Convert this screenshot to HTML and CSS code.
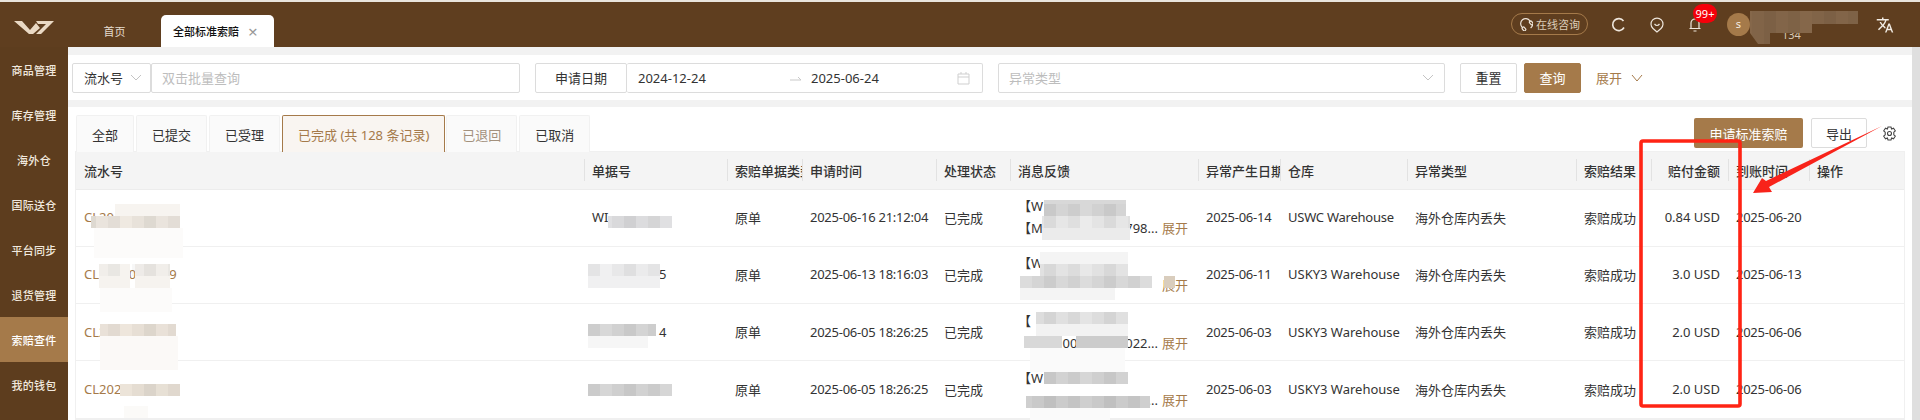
FILE: index.html
```html
<!DOCTYPE html>
<html lang="zh-CN">
<head>
<meta charset="utf-8">
<title>全部标准索赔</title>
<link rel="stylesheet" href="styles.css">
</head>
<body>
<div class="app">
  <div class="topline"></div>
  <header class="header">
    <div class="logo">
      <svg width="40" height="15" viewBox="0 0 40 15"><path class="logo-mark" d="M0 1 H8 L16 10 L22 3 L26 8 L19 14 H15 Z M22 1 H40 L27 14 H22 L32 4 H24 Z"/></svg>
    </div>
    <nav class="page-tabs">
      <a class="page-tab">首页</a>
      <a class="page-tab page-tab-active">全部标准索赔<span class="tab-close">×</span></a>
    </nav>
    <div class="tools">
      <div class="consult">
        <svg class="ic-line" width="14" height="14" viewBox="0 0 14 14"><g transform="rotate(-40 7 7)"><path d="M2 8 V6.5 A5 5 0 0 1 12 6.5 V8"/><rect x="1" y="7.5" width="2.5" height="4" rx="1"/><rect x="10.500" y="7.500" width="2.500" height="4" rx="1"/><path d="M11.500 11.500 Q11 13 8 13"/></g></svg>
        <span>在线咨询</span>
      </div>
      <svg class="ic-line tool-refresh" width="15" height="15" viewBox="0 0 15 15"><path d="M12.500 4 A6 6 0 1 0 13 10.500"/></svg>
      <svg class="ic-line tool-pin" width="14" height="16" viewBox="0 0 14 16"><path d="M7 15 L3 11.500 A6 6 0 1 1 11 11.500 Z"/><path d="M4.500 7 Q7 10 9.500 7"/></svg>
      <div class="bell">
        <svg class="ic-line" width="12" height="15" viewBox="0 0 12 15"><path d="M2 11 V6 A4 4 0 0 1 10 6 V11 M0.500 11.500 H11.500 M4.500 14 H7.500"/></svg>
        <span class="badge">99+</span>
      </div>
      <div class="user">
        <span class="avatar">s</span>
        <span class="user-id">134</span>
      </div>
      <svg class="tool-lang" width="18" height="18" viewBox="0 0 24 24"><path d="M12.87 15.07l-2.54-2.51.03-.03c1.74-1.94 2.98-4.17 3.71-6.53H17V4h-7V2H8v2H1v1.99h11.17C11.5 7.92 10.44 9.75 9 11.35 8.07 10.32 7.3 9.19 6.69 8h-2c.73 1.63 1.73 3.17 2.98 4.56l-5.09 5.02L4 19l5-5 3.11 3.11.76-2.04zM18.5 10h-2L12 22h2l1.12-3h4.75L21 22h2l-4.5-12zm-2.62 7l1.62-4.33L19.12 17h-3.24z"/></svg>
    </div>
  </header>
  <div class="body">
    <aside class="sidebar">
      <a class="side-item">商品管理</a>
      <a class="side-item">库存管理</a>
      <a class="side-item">海外仓</a>
      <a class="side-item">国际送仓</a>
      <a class="side-item">平台同步</a>
      <a class="side-item">退货管理</a>
      <a class="side-item side-item-active">索赔查件</a>
      <a class="side-item">我的钱包</a>
    </aside>
    <main class="content">
      <section class="search">
        <div class="ctl ctl-type">流水号<svg class="chev" width="12" height="7" viewBox="0 0 12 7"><path d="M1 1 L6 6 L11 1"/></svg></div>
        <div class="ctl ctl-query ph">双击批量查询</div>
        <div class="ctl ctl-label">申请日期</div>
        <div class="ctl ctl-range">
          <span class="date-a">2024-12-24</span>
          <svg class="range-arrow" width="11" height="6" viewBox="0 0 11 6"><path d="M0 5 H11 L8 2"/></svg>
          <span class="date-b">2025-06-24</span>
          <svg class="cal" width="13" height="14" viewBox="0 0 13 14"><path d="M1 3 H12 V13 H1 Z M1 6 H12 M4 1 V3 M9 1 V3"/></svg>
        </div>
        <div class="ctl ctl-kind ph">异常类型<svg class="chev" width="12" height="7" viewBox="0 0 12 7"><path d="M1 1 L6 6 L11 1"/></svg></div>
        <div class="ctl btn-reset">重置</div>
        <div class="ctl btn-query">查询</div>
        <div class="expand">展开<svg class="chev chev-gold" width="12" height="8" viewBox="0 0 12 8"><path d="M1 1 L6 7 L11 1"/></svg></div>
      </section>
      <section class="panel">
        <div class="panel-top">
          <div class="status-tabs">
            <a class="stab">全部</a>
            <a class="stab">已提交</a>
            <a class="stab">已受理</a>
            <a class="stab stab-active">已完成 (共 128 条记录)</a>
            <a class="stab stab-muted">已退回</a>
            <a class="stab">已取消</a>
          </div>
          <div class="actions">
            <div class="act act-main">申请标准索赔</div>
            <div class="act act-plain">导出</div>
            <svg class="gear" width="15" height="15" viewBox="0 0 15 15"><path d="M6 1 H9 L9.600 3 L11.500 2.200 L13.300 4.800 L11.800 6.200 V8.800 L13.300 10.200 L11.500 12.800 L9.600 12 L9 14 H6 L5.400 12 L3.500 12.800 L1.700 10.200 L3.200 8.800 V6.200 L1.700 4.800 L3.500 2.200 L5.400 3 Z"/><circle cx="7.500" cy="7.500" r="2"/></svg>
          </div>
        </div>
        <table class="grid">
          <colgroup>
            <col class="c-serial"><col class="c-doc"><col class="c-type"><col class="c-time"><col class="c-state"><col class="c-msg"><col class="c-date"><col class="c-wh"><col class="c-kind"><col class="c-result"><col class="c-amt"><col class="c-paid"><col class="c-op">
          </colgroup>
          <thead>
            <tr>
              <th>流水号</th><th>单据号</th><th>索赔单据类型</th><th>申请时间</th><th>处理状态</th><th>消息反馈</th><th>异常产生日期</th><th>仓库</th><th>异常类型</th><th>索赔结果</th><th class="num">赔付金额</th><th>到账时间</th><th>操作</th>
            </tr>
          </thead>
          <tbody>
            <tr>
              <td class="serial">CL20</td><td>WI</td><td>原单</td><td class="tight">2025-06-16 21:12:04</td><td>已完成</td>
              <td><div class="msg"><div>【W</div><div class="msg-line"><span>【M</span><span class="msg-end">798...<a class="more">展开</a></span></div></div></td>
              <td class="tight">2025-06-14</td><td class="tight">USWC Warehouse</td><td>海外仓库内丢失</td><td>索赔成功</td><td class="num">0.84 USD</td><td class="tight">2025-06-20</td><td></td>
            </tr>
            <tr>
              <td class="serial">CL&#8199;&#8199;&#8199;&#8199;0&#8199;&#8199;&#8199;&#8199; 9</td><td>&#8199;&#8199;&#8199;&#8199;&#8199;&#8199;&#8199;&#8199;&#8199;5</td><td>原单</td><td class="tight">2025-06-13 18:16:03</td><td>已完成</td>
              <td><div class="msg"><div>【W</div><div class="msg-line"><span></span><span class="msg-end"><a class="more">展开</a></span></div></div></td>
              <td class="tight">2025-06-11</td><td>USKY3 Warehouse</td><td>海外仓库内丢失</td><td>索赔成功</td><td class="num">3.0 USD</td><td class="tight">2025-06-13</td><td></td>
            </tr>
            <tr>
              <td class="serial">CL2</td><td>&#8199;&#8199;&#8199;&#8199;&#8199;&#8199;&#8199;&#8199;&#8199;4</td><td>原单</td><td class="tight">2025-06-05 18:26:25</td><td>已完成</td>
              <td><div class="msg"><div>【</div><div class="msg-line"><span>&#8199;&#8199;&#8199;&#8199;&#8199;&#8199;00</span><span class="msg-end">022...<a class="more">展开</a></span></div></div></td>
              <td class="tight">2025-06-03</td><td>USKY3 Warehouse</td><td>海外仓库内丢失</td><td>索赔成功</td><td class="num">2.0 USD</td><td class="tight">2025-06-06</td><td></td>
            </tr>
            <tr>
              <td class="serial">CL202</td><td></td><td>原单</td><td class="tight">2025-06-05 18:26:25</td><td>已完成</td>
              <td><div class="msg"><div>【W</div><div class="msg-line"><span></span><span class="msg-end">...<a class="more">展开</a></span></div></div></td>
              <td class="tight">2025-06-03</td><td>USKY3 Warehouse</td><td>海外仓库内丢失</td><td>索赔成功</td><td class="num">2.0 USD</td><td class="tight">2025-06-06</td><td></td>
            </tr>
          </tbody>
        </table>
      </section>
    </main>
    <div class="scrollbar"></div>
  </div>
</div>

<svg class="markup" width="1920" height="420" viewBox="0 0 1920 420">
  <defs>
    <pattern id="tile" width="60" height="12" patternUnits="userSpaceOnUse">
      <rect x="12" width="12" height="12" fill="#000" fill-opacity=".03"/>
      <rect x="24" width="12" height="12" fill="#000" fill-opacity=".07"/>
      <rect x="36" width="12" height="12" fill="#000" fill-opacity=".02"/>
      <rect x="48" width="12" height="12" fill="#000" fill-opacity=".05"/>
    </pattern>
  </defs>
  <!-- user name mosaic -->
  <g>
    <path fill="#85674a" d="M1750 11 H1858 V24 H1812 V33 H1770 V44 H1758 L1750 33 Z"/>
    <path fill="url(#tile)" d="M1750 11 H1858 V24 H1812 V33 H1770 V44 H1758 L1750 33 Z"/>
  </g>
  <!-- serial no. mosaic -->
  <g>
    <rect x="115" y="204" width="65" height="12" fill="#f7f4f0"/>
    <rect x="91" y="216" width="89" height="12" fill="#efe9e1"/><rect x="91" y="216" width="89" height="12" fill="url(#tile)"/>
    <rect x="94" y="228" width="89" height="30" fill="#fcfbfa"/>
    <rect x="99" y="264" width="31" height="24" fill="#f6f3ef"/><rect x="135" y="264" width="35" height="24" fill="#f6f3ef"/><rect x="99" y="264" width="71" height="12" fill="url(#tile)"/>
    <rect x="100" y="288" width="72" height="24" fill="#fcfbfa"/>
    <rect x="100" y="324" width="76" height="12" fill="#eee6dc"/><rect x="100" y="324" width="76" height="12" fill="url(#tile)"/>
    <rect x="100" y="336" width="78" height="34" fill="#fbf9f7"/>
    <rect x="120" y="384" width="60" height="12" fill="#ece4d9"/><rect x="120" y="384" width="60" height="12" fill="url(#tile)"/>
    <rect x="124" y="406" width="24" height="12" fill="#fbfaf8"/>
  </g>
  <!-- document no. mosaic -->
  <g>
    <rect x="608" y="216" width="64" height="12" fill="#e0e0e2"/><rect x="608" y="216" width="64" height="12" fill="url(#tile)"/>
    <rect x="588" y="264" width="72" height="24" fill="#f0f0f1"/><rect x="588" y="264" width="72" height="12" fill="url(#tile)"/>
    <rect x="588" y="324" width="68" height="12" fill="#d8d8d8"/><rect x="588" y="324" width="68" height="12" fill="url(#tile)"/>
    <rect x="588" y="336" width="60" height="12" fill="#f6f6f6"/>
    <rect x="588" y="384" width="84" height="12" fill="#d6d6d6"/><rect x="588" y="384" width="84" height="12" fill="url(#tile)"/>
  </g>
  <!-- message mosaic -->
  <g>
    <rect x="1044" y="200" width="82" height="16" fill="#d8d8d8"/><rect x="1044" y="204" width="82" height="12" fill="url(#tile)"/>
    <rect x="1042" y="216" width="88" height="24" fill="#ebebeb"/><rect x="1042" y="216" width="88" height="12" fill="url(#tile)"/>
    <rect x="1040" y="252" width="88" height="12" fill="#f4f4f4"/>
    <rect x="1040" y="264" width="88" height="12" fill="#e8e8e8"/><rect x="1040" y="264" width="88" height="12" fill="url(#tile)"/>
    <rect x="1020" y="276" width="132" height="12" fill="#dcdcdc"/><rect x="1020" y="276" width="132" height="12" fill="url(#tile)"/>
    <rect x="1020" y="288" width="95" height="12" fill="#f4f4f4"/>
    <rect x="1164" y="276" width="11" height="12" fill="#d9cdbd"/>
    <rect x="1036" y="312" width="92" height="12" fill="#e4e4e4"/><rect x="1036" y="312" width="92" height="12" fill="url(#tile)"/>
    <rect x="1036" y="324" width="92" height="12" fill="#f2f2f2"/>
    <rect x="1024" y="336" width="38" height="12" fill="#d8d8d8"/><rect x="1076" y="336" width="52" height="12" fill="#cccccc"/>
    <rect x="1030" y="348" width="95" height="24" fill="#fafafa"/>
    <rect x="1044" y="372" width="84" height="12" fill="#d6d6d6"/><rect x="1044" y="372" width="84" height="12" fill="url(#tile)"/>
    <rect x="1026" y="396" width="124" height="12" fill="#cfcfcf"/><rect x="1026" y="396" width="124" height="12" fill="url(#tile)"/>
    <rect x="1030" y="408" width="80" height="12" fill="#fafafa"/>
  </g>
  <!-- red annotation -->
  <rect class="red-box" x="1641" y="141" width="99" height="265" rx="2"/>
  <polygon class="red-arrow" points="1882,126 1766,181 1762,178 1753,193 1772,192 1769,187"/>
</svg>
</body>
</html>
```
FILE: styles.css
```css
* { box-sizing: border-box; }
html, body { margin: 0; height: 420px; overflow: hidden; }
body {
  font-family: "Noto Sans", "Noto Sans CJK SC", sans-serif;
  font-size: 13px;
  color: #333;
  background: #f2f2f2;
  position: relative;
}
a { color: inherit; text-decoration: none; }

.app { height: 420px; display: flex; flex-direction: column; }
.topline { height: 2px; background: #e9e4dc; }

/* header */
.header { height: 45px; background: #5f3e1f; display: flex; align-items: stretch; }
.logo { width: 68px; display: flex; justify-content: center; padding-top: 18px; }
.logo-mark { fill: #ead9c4; }
.page-tabs { display: flex; align-items: flex-end; margin-left: 24px; flex: 1; }
.page-tab { height: 32px; width: 69px; display: flex; align-items: center; justify-content: center; padding-right: 24px; color: #e6dccf; font-size: 11px; }
.page-tab-active { width: 113px; padding: 0 0 0 12px; justify-content: flex-start; background: #fff; color: #111; border-radius: 5px 5px 0 0; font-weight: 500; }
.tab-close { margin-left: 9px; color: #999; font-size: 17px; font-weight: 400; line-height: 1; }
.tools { display: flex; align-items: center; }
.consult { width: 77px; height: 22px; margin-top: -1px; display: flex; align-items: center; gap: 3px; padding-left: 7px; border: 1px solid #a57a4a; border-radius: 11px; color: #dccdb9; font-size: 11px; }
.ic-line { fill: none; stroke: #eee6dc; stroke-width: 1.2; }
.tool-refresh { margin-left: 23px; stroke-width: 1.6; }
.tool-pin { margin-left: 24px; }
.bell { width: 30px; margin-left: 25px; display: flex; position: relative; }
.badge { position: absolute; left: 4px; top: -13px; width: 24px; height: 19px; border-radius: 10px; background: #f5000a; color: #fff; font-size: 11px; line-height: 19px; text-align: center; }
.user { width: 129px; margin-left: 8px; display: flex; align-items: center; }
.avatar { width: 23px; height: 23px; border-radius: 50%; background: #a57a4a; color: #f5ede3; font-size: 11px; line-height: 22px; text-align: center; }
.user-id { margin: 20px 0 0 32px; color: #d8cab8; font-size: 11px; line-height: 12px; }
.tool-lang { margin: 0 26px 0 20px; fill: #f2ece4; }

/* body */
.body { flex: 1; min-height: 0; display: flex; }
.sidebar { width: 68px; background: #5d3d1e; display: flex; flex-direction: column; }
.side-item { height: 45px; display: flex; align-items: center; justify-content: center; color: #f1e9df; font-size: 11px; font-weight: 500; letter-spacing: .3px; }
.side-item-active { background: #a57a4a; color: #fff; }
.content { width: 1844px; padding-top: 8px; display: flex; flex-direction: column; gap: 7px; }
.scrollbar { width: 8px; background: #dfdfdf; }

/* search */
.search { height: 45px; padding-left: 4px; background: #fff; display: flex; align-items: center; }
.ctl { height: 30px; display: flex; align-items: center; border: 1px solid #dcdcdc; border-radius: 2px; background: #fff; }
.ph { color: #bdbdbd; }
.chev { fill: none; stroke: #c4c4c4; stroke-width: 1; }
.chev-gold { stroke: #a57a4a; margin-left: 9px; }
.ctl-type { width: 79px; padding-left: 11px; gap: 7px; }
.ctl-query { width: 369px; padding-left: 10px; }
.ctl-label { width: 92px; margin-left: 15px; justify-content: center; }
.ctl-range { width: 356px; padding: 0 12px 0 11px; border-left: 0; }
.date-a { width: 152px; }
.range-arrow { fill: none; stroke: #c9c9c9; stroke-width: 1; }
.date-b { margin-left: 10px; flex: 1; }
.cal { fill: none; stroke: #cfcfcf; stroke-width: 1; }
.ctl-kind { width: 447px; margin-left: 15px; padding: 0 10px 0 10px; justify-content: space-between; }
.btn-reset { width: 57px; margin-left: 15px; justify-content: center; }
.btn-query { width: 57px; margin-left: 7px; justify-content: center; background: #a57a4a; border-color: #a57a4a; color: #fff; }
.expand { margin-left: 15px; display: flex; align-items: center; color: #a57a4a; }

/* panel */
.panel { flex: 1; min-height: 0; padding: 8px 8px 0; background: #fff; }
.panel-top { height: 37px; display: flex; justify-content: space-between; align-items: flex-start; }
.status-tabs { display: flex; gap: 2px; }
.stab { height: 37px; padding: 0 15px; display: flex; align-items: center; background: #fafafa; border: 1px solid #f1f1f1; border-bottom: 0; border-radius: 2px 2px 0 0; }
.stab-active { margin-right: -1px; background: #f9f5f1; border-color: #a57a4a; color: #a57a4a; }
.stab-muted { color: #a3917d; }
.actions { height: 30px; margin-top: 3px; display: flex; align-items: center; }
.act { height: 30px; display: flex; align-items: center; justify-content: center; border-radius: 2px; }
.act-main { width: 109px; background: #a57a4a; color: #fff; }
.act-plain { width: 56px; margin-left: 8px; border: 1px solid #dcdcdc; }
.gear { margin: 0 7px 0 15px; fill: none; stroke: #444; stroke-width: 1.1; }

/* table */
.grid { width: 1828px; table-layout: fixed; border-collapse: collapse; box-shadow: 0 0 0 1px #f0f0f0; }
.c-serial { width: 508px; } .c-doc { width: 143px; } .c-type { width: 75px; } .c-time { width: 134px; }
.c-state { width: 74px; } .c-msg { width: 188px; } .c-date { width: 82px; } .c-wh { width: 127px; }
.c-kind { width: 169px; } .c-result { width: 75px; } .c-amt { width: 77px; } .c-paid { width: 81px; } .c-op { width: 95px; }
.grid th { height: 37px; padding: 0 8px; overflow: hidden; white-space: nowrap; text-align: left; font-weight: 500; color: #333; background: #f4f4f4 linear-gradient(#e2e2e2, #e2e2e2) left center / 1px 22px no-repeat; border-bottom: 1px solid #ececec; }
.grid th:first-child { background-image: none; }
.grid td { height: 57.33px; padding: 0 8px 1px; overflow: hidden; white-space: pre; border-bottom: 1px solid #f0f0f0; }
.grid .num { text-align: right; }
.grid .tight { letter-spacing: -.25px; }
.serial { color: #a57a4a; }
.msg { line-height: 22px; }
.msg-line { display: flex; justify-content: space-between; padding-right: 2px; }
.msg-end { display: flex; gap: 4px; }
.more { color: #a57a4a; }

/* overlay: annotation drawn over the screenshot */
.markup { position: absolute; left: 0; top: 0; pointer-events: none; }
.red-box { fill: none; stroke: #ff2414; stroke-width: 3.6; }
.red-arrow { fill: #f8231a; }
```
